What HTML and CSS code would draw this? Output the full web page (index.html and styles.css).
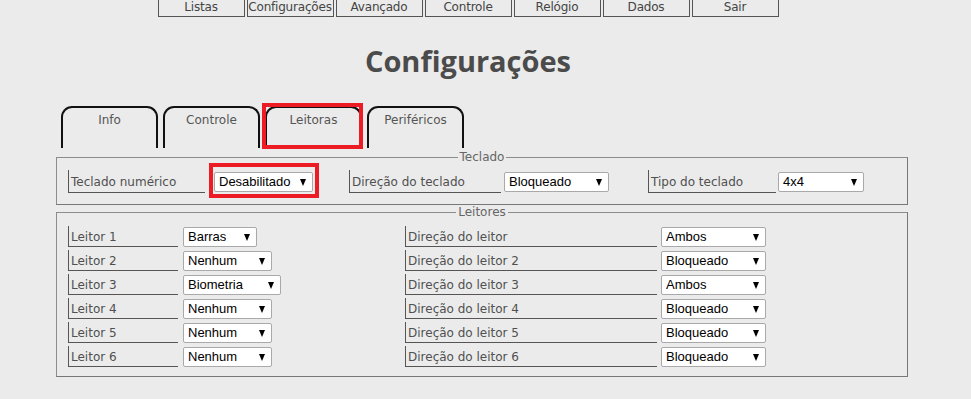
FILE: index.html
```html
<!DOCTYPE html>
<html lang="pt-BR">
<head>
<meta charset="UTF-8" />
<meta name="viewport" content="width=device-width, initial-scale=1" />
<title>Configurações</title>
<link rel="stylesheet" href="styles.css">
</head>
<body>
<div class="top">
  <nav class="menu">
    <a href="#">Listas</a>
    <a href="#">Configurações</a>
    <a href="#">Avançado</a>
    <a href="#">Controle</a>
    <a href="#">Relógio</a>
    <a href="#">Dados</a>
    <a href="#">Sair</a>
  </nav>
  <h1 class="title">Configurações</h1>
</div>

<div class="tabs">
  <div class="tab">Info</div>
  <div class="tab">Controle</div>
  <div class="tab active marked">Leitoras</div>
  <div class="tab">Periféricos</div>
</div>

<fieldset class="group keys">
  <legend>Teclado</legend>
  <div class="keys-row">
    <label class="field f1">Teclado numérico</label>
    <span class="pick p1 marked"><select><option>Desabilitado</option></select></span>
    <label class="field f2">Direção do teclado</label>
    <span class="pick p2"><select><option>Bloqueado</option></select></span>
    <label class="field f3">Tipo do teclado</label>
    <span class="pick p3"><select><option>4x4</option></select></span>
  </div>
</fieldset>

<fieldset class="group readers">
  <legend>Leitores</legend>
  <div class="readers-grid">
    <label class="field left">Leitor 1</label>
    <span class="pick w74"><select><option>Barras</option></select></span>
    <label class="field right">Direção do leitor</label>
    <span class="pick w105"><select><option>Ambos</option></select></span>

    <label class="field left">Leitor 2</label>
    <span class="pick w89"><select><option>Nenhum</option></select></span>
    <label class="field right">Direção do leitor 2</label>
    <span class="pick w105"><select><option>Bloqueado</option></select></span>

    <label class="field left">Leitor 3</label>
    <span class="pick w98"><select><option>Biometria</option></select></span>
    <label class="field right">Direção do leitor 3</label>
    <span class="pick w105"><select><option>Ambos</option></select></span>

    <label class="field left">Leitor 4</label>
    <span class="pick w89"><select><option>Nenhum</option></select></span>
    <label class="field right">Direção do leitor 4</label>
    <span class="pick w105"><select><option>Bloqueado</option></select></span>

    <label class="field left">Leitor 5</label>
    <span class="pick w89"><select><option>Nenhum</option></select></span>
    <label class="field right">Direção do leitor 5</label>
    <span class="pick w105"><select><option>Bloqueado</option></select></span>

    <label class="field left">Leitor 6</label>
    <span class="pick w89"><select><option>Nenhum</option></select></span>
    <label class="field right">Direção do leitor 6</label>
    <span class="pick w105"><select><option>Bloqueado</option></select></span>
  </div>
</fieldset>
</body>
</html>
```

FILE: styles.css
```css
body {
  background: #ebebeb;
  font-family: 'DejaVu Sans', Verdana, sans-serif;
  font-size: 12px;
  color: #505050;
  margin: 0 8px;
}
.top {
  width: 920px;
  text-align: center;
}
.menu {
  display: flex;
  justify-content: center;
  gap: 2px;
  height: 17px;
}
.menu a {
  box-sizing: border-box;
  width: 87px;
  height: 17px;
  border: 1px solid #555;
  border-top: none;
  color: #444;
  text-decoration: none;
  line-height: 15px;
  font-size: 12px;
  letter-spacing: -0.2px;
  white-space: nowrap;
  overflow: hidden;
}
.title {
  font-family: 'Open Sans', sans-serif;
  font-weight: 700;
  font-size: 29px;
  line-height: 40px;
  color: #4b4b4b;
  margin: 24px 0 0;
}
.tabs {
  display: flex;
  gap: 5px;
  margin: 25px 0 0 53px;
}
.tab {
  box-sizing: border-box;
  width: 97px;
  height: 42px;
  border: 2px solid #111;
  border-bottom: none;
  border-radius: 11px 11px 0 0;
  text-align: center;
  padding-top: 5px;
  color: #555;
  position: relative;
}
.marked {
  position: relative;
}
.marked::after {
  content: '';
  position: absolute;
  border: 4px solid #ed1c24;
  pointer-events: none;
}
.tab.marked::after {
  left: -5px;
  right: -3px;
  top: -5px;
  bottom: -1px;
}
.group {
  box-sizing: border-box;
  width: 852px;
  margin: 2px 0 0 48px;
  border: 1px solid #8c8c8c;
  border-right-color: #777;
  border-bottom-color: #777;
  padding: 6px 11px 11px;
}
.group legend {
  margin: 0 auto;
  padding: 0 2px;
  line-height: 14px;
  color: #666;
}
.readers {
  margin-top: 0;
  padding: 7px 11px 9px;
}
.keys-row {
  display: flex;
  align-items: center;
  height: 23px;
}
.field {
  box-sizing: border-box;
  border-left: 1px solid #555;
  border-bottom: 1px solid #555;
  padding: 2px 0 0 2px;
  display: flex;
  align-items: center;
  height: 100%;
  white-space: nowrap;
}
.f1 { width: 137px; margin-right: 9px; }
.f2 { width: 152px; margin: 0 3px 0 36px; }
.f3 { width: 128px; margin: 0 2px 0 39px; }
.p1 { width: 99px; }
.p2 { width: 105px; }
.p3 { width: 86px; }
.p1.marked::after {
  left: -5px;
  right: -6px;
  top: -9px;
  bottom: -6px;
}
.readers-grid {
  display: grid;
  grid-template-columns: 115px 222px 256px auto;
  grid-auto-rows: 21px;
  row-gap: 3px;
  align-items: center;
}
.field.left { width: 110px; }
.field.right { width: 252px; }
.pick {
  display: inline-block;
  height: 20px;
  position: relative;
}
.pick select {
  appearance: none;
  -webkit-appearance: none;
  box-sizing: border-box;
  width: 100%;
  height: 20px;
  margin: 0;
  padding: 0 0 0 4px;
  border: 1px solid #a9a9a9;
  border-radius: 2px;
  background: #fff;
  color: #000;
  font-family: 'Liberation Sans', Arial, sans-serif;
  font-size: 13px;
}
.pick::before {
  content: '';
  position: absolute;
  right: 7px;
  top: 7px;
  border-left: 3.5px solid transparent;
  border-right: 3.5px solid transparent;
  border-top: 7px solid #000;
  pointer-events: none;
}
.w74 { width: 74px; }
.w89 { width: 89px; }
.w98 { width: 98px; }
.w105 { width: 105px; }
```
